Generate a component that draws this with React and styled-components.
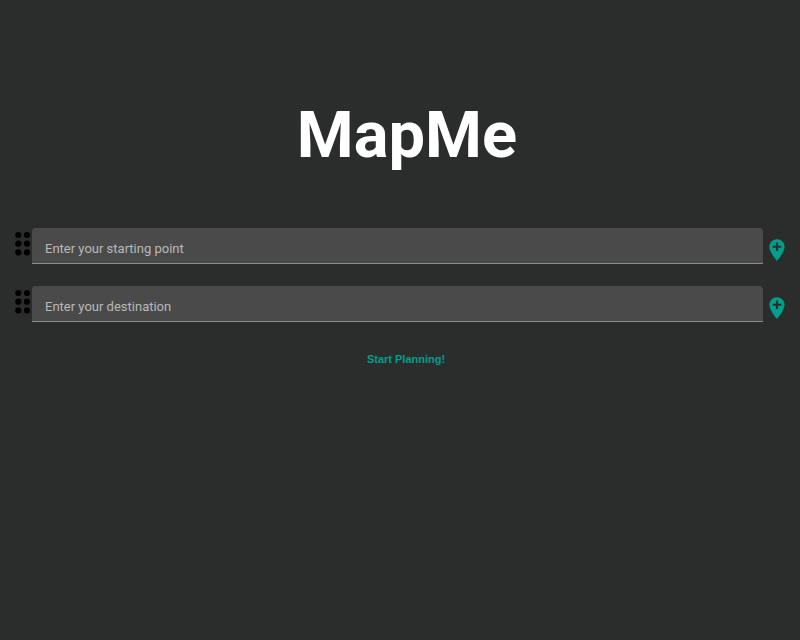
import React from "react";
import styled, { createGlobalStyle } from "styled-components";

const GlobalStyle = createGlobalStyle`
  body {
    margin: 0;
    background: #2b2d2c;
    font-family: Roboto, sans-serif;
  }
`;

const Page = styled.main`
  display: flex;
  flex-direction: column;
  padding: 95px 14px 0;
`;

const Title = styled.h1`
  margin: 0 0 53px 14px;
  color: #fff;
  font-size: 65px;
  font-weight: 700;
  line-height: 80px;
  text-align: center;
`;

const Form = styled.form`
  display: flex;
  flex-direction: column;
  gap: 22px;
`;

const Row = styled.div`
  display: flex;
  align-items: flex-start;
`;

const Handle = styled.svg`
  flex: none;
  width: 18px;
  height: 30px;
  fill: #000;
`;

const Field = styled.input`
  flex: 1;
  min-width: 0;
  height: 36px;
  box-sizing: border-box;
  padding: 8px 13px 2px;
  border: 0;
  border-bottom: 1px solid #8b8b8b;
  border-radius: 4px 4px 0 0;
  outline: 0;
  background: #4a4a4a;
  color: #fff;
  font: 400 13px/20px Roboto, sans-serif;

  &::placeholder {
    color: #b9b9b9;
    opacity: 1;
  }
`;

const AddButton = styled.button`
  flex: none;
  display: flex;
  margin: 9px -4px 0 1px;
  padding: 0;
  border: 0;
  background: none;
  color: #009f8b;
  cursor: pointer;
`;

const Pin = styled.svg`
  width: 26px;
  height: 26px;
  fill: currentColor;
`;

const Submit = styled.button`
  align-self: center;
  margin: 7px 0 0 12px;
  padding: 0;
  border: 0;
  background: none;
  color: #009f8b;
  font: 700 11px/16px "Liberation Sans", Arial, sans-serif;
  cursor: pointer;
`;

const stops = ["Enter your starting point", "Enter your destination"];

function Stop({ label }) {
  return (
    <Row>
      <Handle viewBox="0 0 18 30" aria-hidden="true">
        {[7, 15.7, 24.4].map((y) => (
          <React.Fragment key={y}>
            <circle cx="4.3" cy={y} r="3.1" />
            <circle cx="13" cy={y} r="3.1" />
          </React.Fragment>
        ))}
      </Handle>
      <Field type="text" placeholder={label} aria-label={label} />
      <AddButton type="button" aria-label="Add stop">
        <Pin viewBox="0 0 24 24" aria-hidden="true">
          <path d="M12 2C8.14 2 5 5.14 5 9c0 5.25 7 13 7 13s7-7.75 7-13c0-3.86-3.14-7-7-7zm4 8h-3v3h-2v-3H8V8h3V5h2v3h3v2z" />
        </Pin>
      </AddButton>
    </Row>
  );
}

export default function App() {
  return (
    <>
      <GlobalStyle />
      <Page>
        <Title>MapMe</Title>
        <Form onSubmit={(event) => event.preventDefault()}>
          {stops.map((label) => (
            <Stop key={label} label={label} />
          ))}
          <Submit type="submit">Start Planning!</Submit>
        </Form>
      </Page>
    </>
  );
}
